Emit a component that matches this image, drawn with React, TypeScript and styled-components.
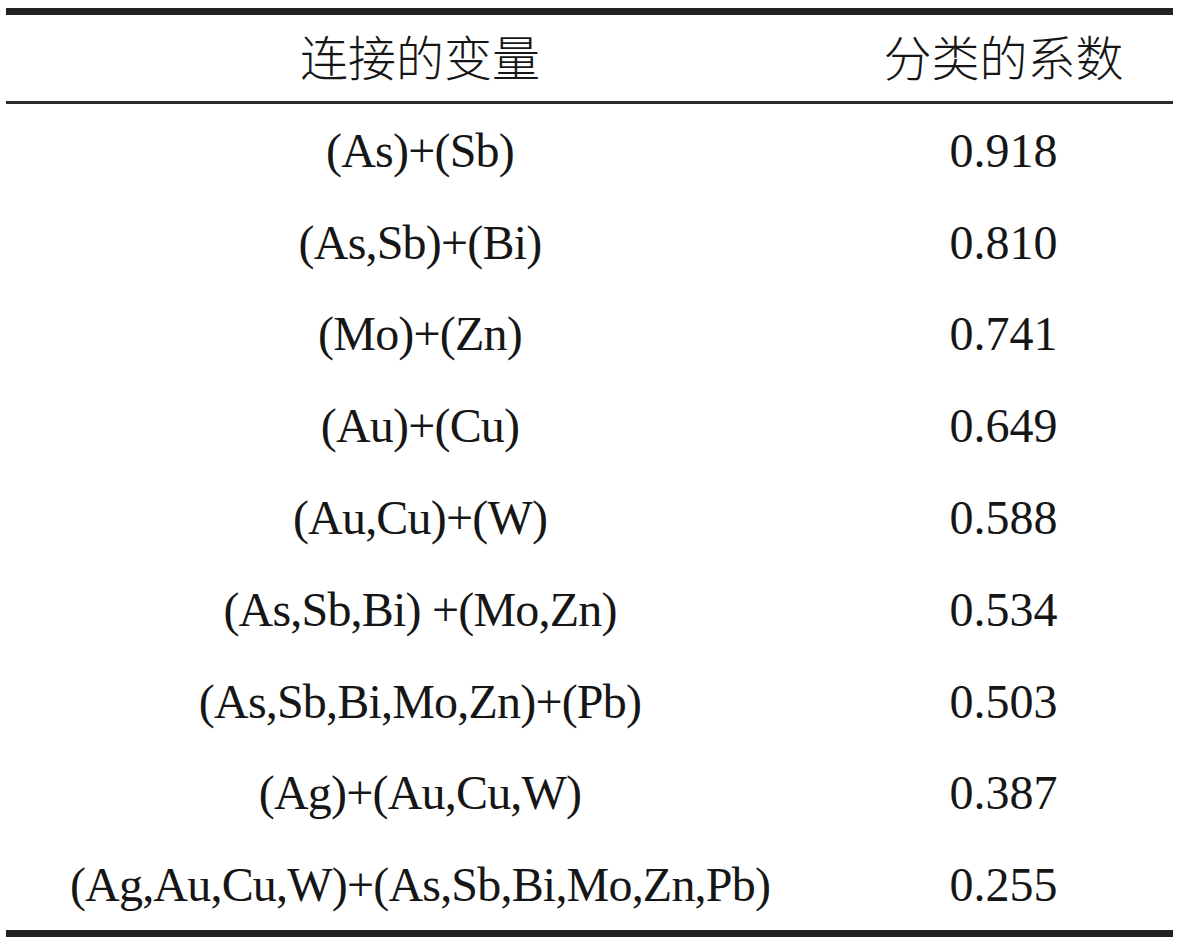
import React from "react";
import styled, { createGlobalStyle } from "styled-components";

const Global = createGlobalStyle`
  html, body { margin: 0; padding: 0; background: #ffffff; }
  body { font-family: "Liberation Serif", "Noto Sans CJK SC", serif; color: #161616; }
`;

const Page = styled.div`
  width: 1182px;
  height: 946px;
  padding: 8px 9px 0 6px;
  box-sizing: border-box;
`;

const Table = styled.div`
  display: flex;
  flex-direction: column;
  border-top: 7px solid #222;
  border-bottom: 7px solid #222;
`;

const Row = styled.div<{ $head?: boolean }>`
  display: grid;
  grid-template-columns: 828px 339px;
  height: ${(p) => (p.$head ? "86px" : "91.8px")};
  align-items: center;
  border-bottom: ${(p) => (p.$head ? "3px solid #2a2a2a" : "none")};
`;

const Cell = styled.div<{ $head?: boolean; $tight?: boolean }>`
  text-align: center;
  font-size: 48px;
  line-height: 1;
  white-space: nowrap;
  letter-spacing: ${(p) => (p.$tight ? "-0.8px" : "0")};
  font-family: ${(p) =>
    p.$head
      ? '"Noto Sans CJK SC", "Liberation Serif", sans-serif'
      : '"Liberation Serif", "Noto Sans CJK SC", serif'};
  font-weight: ${(p) => (p.$head ? 300 : 400)};
  transform: ${(p) => (p.$head ? "translateY(-3px)" : "translateY(1px)")};
`;

const rows: [string, string][] = [
  ["(As)+(Sb)", "0.918"],
  ["(As,Sb)+(Bi)", "0.810"],
  ["(Mo)+(Zn)", "0.741"],
  ["(Au)+(Cu)", "0.649"],
  ["(Au,Cu)+(W)", "0.588"],
  ["(As,Sb,Bi) +(Mo,Zn)", "0.534"],
  ["(As,Sb,Bi,Mo,Zn)+(Pb)", "0.503"],
  ["(Ag)+(Au,Cu,W)", "0.387"],
  ["(Ag,Au,Cu,W)+(As,Sb,Bi,Mo,Zn,Pb)", "0.255"],
];

export default function App() {
  return (
    <>
      <Global />
      <Page>
        <Table>
          <Row $head>
            <Cell $head>连接的变量</Cell>
            <Cell $head>分类的系数</Cell>
          </Row>
          {rows.map(([a, b]) => (
            <Row key={a}>
              <Cell $tight>{a}</Cell>
              <Cell>{b}</Cell>
            </Row>
          ))}
        </Table>
      </Page>
    </>
  );
}
